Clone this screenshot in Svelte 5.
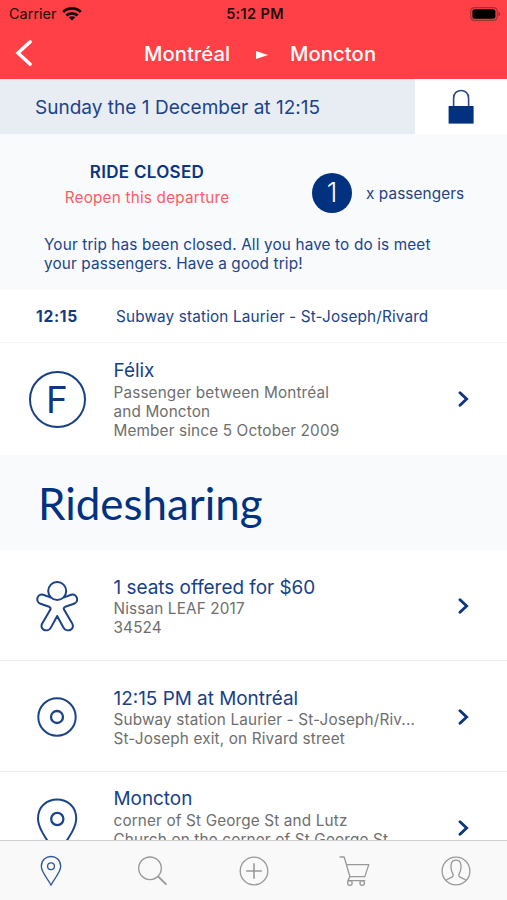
<script>
  const rows = [
    { icon: 'person', title: '1 seats offered for $60', lines: ['Nissan LEAF 2017', '34524'] },
    { icon: 'stop', title: '12:15 PM at Montréal', lines: ['Subway station Laurier - St-Joseph/Riv...', 'St-Joseph exit, on Rivard street'] },
    { icon: 'pin', title: 'Moncton', lines: ['corner of St George St and Lutz', 'Church on the corner of St George St'] }
  ];
</script>

{#snippet chevron()}
  <svg class="chevron" width="12" height="18" viewBox="0 0 12 18"><path d="M2 2.8 L8.6 9 L2 15.2" /></svg>
{/snippet}

<div class="screen">
  <header>
    <div class="status">
      <div class="carrier">
        <span>Carrier</span>
        <svg width="20" height="14" viewBox="0 0 20 14" fill="none" stroke="#150506" stroke-width="2.8">
          <path d="M1.2 5 C6 .2 14 .2 18.8 5" />
          <path d="M4.3 8.6 C7.4 5.5 12.6 5.5 15.7 8.6" />
          <path d="M10 13.6 L6.7 10.3 C8.5 8.8 11.5 8.8 13.3 10.3 Z" fill="#150506" stroke="none" />
        </svg>
      </div>
      <span class="clock">5:12 PM</span>
      <svg class="battery" width="31" height="14" viewBox="0 0 31 14">
        <rect x=".7" y=".7" width="26.6" height="12.6" rx="3.6" fill="none" stroke="#a23034" stroke-width="1.2" />
        <rect x="2.4" y="2.3" width="23" height="9.4" rx="2" fill="#000" />
        <path d="M28.6 5 C30.6 5.6 30.6 8.4 28.6 9 Z" fill="#8f2a2e" />
      </svg>
    </div>
    <nav>
      <svg class="back" width="18" height="28" viewBox="0 0 18 28"><path d="M15.2 2.8 L3 14 L15.2 25.2" /></svg>
      <span class="from">Montréal</span>
      <svg class="arrow" width="12" height="8" viewBox="0 0 12 8"><path d="M0 0 L12 4 L0 8 Z" fill="#fff" /></svg>
      <span class="to">Moncton</span>
    </nav>
  </header>

  <section class="date">
    <div class="day"><span>Sunday the 1 December at 12:15</span></div>
    <div class="lock">
      <svg width="28" height="36" viewBox="0 0 28 36">
        <path d="M6.6 18 V9.2 C6.6 -1 21.6 -1 21.6 9.2 V18" fill="none" stroke="#28488a" stroke-width="1.6" />
        <rect x="1.6" y="17" width="25" height="17.6" fill="#02317f" />
      </svg>
    </div>
  </section>

  <section class="closed">
    <div class="summary">
      <div class="state">
        <strong>RIDE CLOSED</strong>
        <span class="reopen">Reopen this departure</span>
      </div>
      <div class="count">1</div>
      <span class="passengers">x passengers</span>
    </div>
    <p>Your trip has been closed. All you have to do is meet<br />your passengers. Have a good trip!</p>
  </section>

  <section class="stopline">
    <b>12:15</b>
    <span>Subway station Laurier - St-Joseph/Rivard</span>
  </section>

  <section class="row member">
    <div class="icon"><div class="avatar">F</div></div>
    <div class="text">
      <h2>Félix</h2>
      <div>Passenger between Montréal</div>
      <div>and Moncton</div>
      <div>Member since 5 October 2009</div>
    </div>
    {@render chevron()}
  </section>

  <h1>Ridesharing</h1>

  <div class="list">
    {#each rows as row}
      <section class="row {row.icon}">
        <div class="icon">
          {#if row.icon === 'person'}
            <svg width="42" height="52" viewBox="0 0 42 52">
              <circle cx="21.2" cy="11" r="9" />
              <path d="M15 17.6 L7.2 14.8 C.8 13.2 -.8 22 4.4 23.8 L13.2 26.8 C14.6 27.4 14.9 28.4 14.4 29.6 L6.2 43.4 C3 50 12 53 15 47.4 L21.2 36 L27.4 47.4 C30.4 53 39.4 50 36.2 43.4 L28 29.6 C27.5 28.4 27.8 27.4 29.2 26.8 L38 23.8 C43.2 22 41.6 13.2 35.2 14.8 L27.4 17.6" />
            </svg>
          {:else if row.icon === 'stop'}
            <svg width="42" height="42" viewBox="0 0 42 42">
              <circle cx="21" cy="21" r="18.7" />
              <circle cx="21" cy="21" r="6" stroke-width="2.3" />
            </svg>
          {:else}
            <svg width="42" height="62" viewBox="0 0 42 62">
              <path d="M21 60 C16 48 2 34 2 21.5 C2 -4 40.2 -4 40.2 21.5 C40.2 34 26 48 21 60 Z" />
              <circle cx="21.3" cy="22" r="6.1" stroke-width="2.3" />
            </svg>
          {/if}
        </div>
        <div class="text">
          <h2>{row.title}</h2>
          {#each row.lines as line}
            <div>{line}</div>
          {/each}
        </div>
        {@render chevron()}
      </section>
    {/each}
  </div>

  <footer>
    <div class="active">
      <svg width="32" height="32" viewBox="0 0 32 32">
        <path d="M16 30.2 C13.4 24 6.3 17.6 6.3 11.3 C6.3 -1.8 25.7 -1.8 25.7 11.3 C25.7 17.6 18.6 24 16 30.2 Z" />
        <circle cx="16" cy="11.3" r="3.4" />
      </svg>
    </div>
    <div>
      <svg width="32" height="32" viewBox="0 0 32 32">
        <circle cx="14" cy="13.3" r="11.3" />
        <path d="M22 21.4 L30.4 29.6" stroke-width="2" />
      </svg>
    </div>
    <div>
      <svg width="32" height="32" viewBox="0 0 32 32">
        <circle cx="16" cy="16" r="13.8" />
        <path d="M16 8.2 V23.8 M8.2 16 H23.8" stroke-width="1.6" />
      </svg>
    </div>
    <div>
      <svg width="32" height="32" viewBox="0 0 32 32">
        <path d="M.6 2 H5.2 L11 22 M7.6 9.6 H29.8 L25.8 21.6 H10.9 L8.9 25.6 H26.2" />
        <circle cx="10.9" cy="28" r="2.3" />
        <circle cx="23.2" cy="28" r="2.3" />
      </svg>
    </div>
    <div>
      <svg width="32" height="32" viewBox="0 0 32 32">
        <circle cx="16" cy="16" r="13.9" />
        <path d="M5.9 25.4 C8.4 23 12.6 23 13.1 21 C13.4 19 12.6 18.4 11.8 16.5 C10.8 14 9.4 5.2 16 5.2 C22.6 5.2 21.2 14 20.2 16.5 C19.4 18.4 18.6 19 18.9 21 C19.4 23 23.6 23 26.1 25.4" />
      </svg>
    </div>
  </footer>
</div>

<style>
  :global(body) { margin: 0; }
  * { box-sizing: border-box; }
  .screen {
    width: 507px;
    height: 900px;
    display: flex;
    flex-direction: column;
    overflow: hidden;
    background: #fff;
    color: #1c438a;
    font-family: Inter, 'Liberation Sans', sans-serif;
    font-size: 15.3px;
    line-height: 19px;
    letter-spacing: .15px;
    white-space: nowrap;
  }
  svg { display: block; flex: none; }
  header { height: 79px; flex: none; background: #ff4147; letter-spacing: 0; }
  .status {
    height: 27px;
    display: grid;
    grid-template-columns: 1fr auto 1fr;
    align-items: center;
    padding: 0 6px 0 9px;
    color: #250a0b;
    font-size: 14.5px;
  }
  .carrier { display: flex; align-items: center; gap: 5px; }
  .clock { font-weight: 600; letter-spacing: .35px; }
  .battery { justify-self: end; }
  nav { height: 52px; display: flex; align-items: center; padding-left: 15px; color: #fff; font-size: 20.2px; font-weight: 500; letter-spacing: .05px; }
  .back path { fill: none; stroke: #fff; stroke-width: 3.4; stroke-linecap: round; }
  .from { width: 87px; margin-left: 111px; }
  .arrow { margin: 3px 22px 0 25px; }
  .to { letter-spacing: .1px; }
  .date { display: flex; height: 55px; flex: none; }
  .day { width: 415px; padding: 2px 0 0 35px; display: flex; align-items: center; background: #e8ecf3; font-size: 19px; letter-spacing: .02px; }
  .lock { flex: 1; display: flex; align-items: center; justify-content: center; }
  .closed { height: 156px; flex: none; background: #f8fafc; padding-top: 29px; }
  .summary { display: flex; align-items: center; height: 59px; }
  .state { width: 294px; display: flex; flex-direction: column; align-items: center; gap: 6px; padding-bottom: 15px; }
  strong { font-size: 17px; font-weight: 600; color: #0b347f; letter-spacing: .3px; }
  .reopen { color: #ff5a61; letter-spacing: .2px; }
  .count {
    width: 40px;
    height: 40px;
    margin-left: 18px;
    border-radius: 50%;
    background: #02317f;
    color: #fff;
    font-size: 27px;
    font-weight: 300;
    line-height: 40px;
    letter-spacing: 0;
    text-align: center;
  }
  .passengers { margin: 1px 0 0 14px; letter-spacing: .1px; }
  p { margin: 13px 0 0 44px; }
  .stopline { height: 53px; flex: none; display: flex; align-items: center; padding: 0 0 0 36px; border-bottom: 1px solid #f5f6f8; }
  .stopline b { width: 80px; font-size: 15.6px; font-weight: 700; color: #123b83; letter-spacing: .7px; }
  .row { flex: none; display: flex; align-items: center; height: 111px; padding-top: 1px; border-bottom: 1px solid #ececee; color: #6e6e6e; }
  .row.member { height: 112px; padding: 0; border: 0; }
  .icon { width: 114px; flex: none; display: flex; justify-content: center; }
  .icon svg { fill: none; stroke: #1b438a; stroke-width: 2; stroke-linejoin: round; }
  .avatar { width: 57px; height: 57px; border: 2px solid #174088; border-radius: 50%; color: #0d3883; font-size: 37px; line-height: 54px; letter-spacing: 0; text-align: center; }
  .text { width: 344px; margin-left: -.5px; }
  .pin .text { padding-bottom: 19px; }
  h2 { margin: 0; color: #174088; font-size: 18.9px; font-weight: 400; line-height: 24px; letter-spacing: 0; }
  .person h2, .stop h2 { padding-top: 2px; line-height: 22px; }
  .chevron path { fill: none; stroke: #0d3680; stroke-width: 2.9; stroke-linecap: round; }
  h1 { margin: 0; height: 95px; flex: none; display: flex; align-items: center; padding-left: 38px; background: #f8fafc; color: #02317f; font: 400 43.9px/54px Lato, sans-serif; letter-spacing: 0; }
  .list { flex: 1; min-height: 0; overflow: hidden; }
  footer { height: 60px; flex: none; display: flex; border-top: 1px solid #cfcfcf; background: #f9f9f9; }
  footer div { flex: 1; display: flex; align-items: center; justify-content: center; }
  footer svg { fill: none; stroke: #999; stroke-width: 1.3; stroke-linejoin: round; }
  footer .active svg { stroke: #30569a; }
</style>
